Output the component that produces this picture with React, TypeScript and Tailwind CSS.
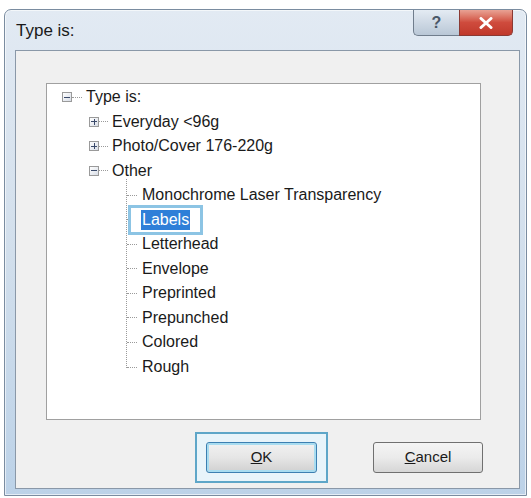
import React from 'react'

const font = { fontFamily: '"Liberation Sans", Arial, sans-serif' }

const ExpandBox = ({ open }: { open: boolean }) => (
  <span className="relative flex h-[10px] w-[10px] shrink-0 items-center justify-center border border-[#9a9a9a] bg-gradient-to-br from-white to-[#d8dde6]">
    <span className="absolute h-[1px] w-[6px] bg-[#3a4a6a]" />
    {!open && <span className="absolute h-[6px] w-[1px] bg-[#3a4a6a]" />}
  </span>
)

const Dash = ({ w }: { w: string }) => (
  <span className={`${w} shrink-0 border-t border-dotted border-[#9a9a9a]`} />
)

const leaves = [
  'Monochrome Laser Transparency',
  'Labels',
  'Letterhead',
  'Envelope',
  'Preprinted',
  'Prepunched',
  'Colored',
  'Rough',
]

export default function App() {
  return (
    <div className="h-[498px] w-[531px] overflow-hidden bg-white pl-[4px] pt-[9px]" style={font}>
      {/* window frame */}
      <div className="flex h-[487px] w-[523px] flex-col rounded-t-[7px] border border-[#7a8ca0] bg-gradient-to-b from-[#e2eaf3] via-[#d2dfec] to-[#bcd2e8] pb-[6px] pl-[10px] pr-[6px] shadow-[inset_0_0_0_1px_rgba(255,255,255,0.6)]">
        {/* title bar */}
        <div className="relative flex h-[40px] shrink-0 items-center">
          <span className="pl-[1px] pt-[2px] text-[17px] text-[#1a1a1a]">Type is:</span>
          <div className="absolute right-[7px] top-0 flex h-[26px]">
            <div className="flex w-[46px] items-center justify-center rounded-bl-[5px] border border-r-0 border-t-0 border-[#707d8c] bg-gradient-to-b from-[#e4ebf3] to-[#b9c7d6]">
              <span className="text-[16px] font-bold leading-none text-[#4a5868]">?</span>
            </div>
            <div className="flex w-[54px] items-center justify-center rounded-br-[5px] border border-t-0 border-[#8a3a34] bg-gradient-to-b from-[#e8a294] via-[#cf4b3d] to-[#c0392b]">
              <svg width="14" height="12" viewBox="0 0 14 12">
                <path d="M2 1.5 L12 10.5 M12 1.5 L2 10.5" stroke="#fff" strokeWidth="3" strokeLinecap="round" />
              </svg>
            </div>
          </div>
        </div>

        {/* client area */}
        <div className="flex flex-1 flex-col border border-[#8a98a8] bg-[#f0f0f0] pl-[30px] pr-[38px] pt-[32px]">
          {/* tree */}
          <div className="h-[337px] border border-[#a0a0a0] bg-white pl-[15px] pt-[1px] text-[16px] text-[#1a1a1a]">
            <div className="flex h-[24.5px] items-center">
              <ExpandBox open />
              <Dash w="w-[10px]" />
              <span className="pl-[4px]">Type is:</span>
            </div>
            <div className="ml-[32px] pl-0">
              <div className="-ml-[5px] flex h-[24.5px] items-center">
                <ExpandBox open={false} />
                <Dash w="w-[9px]" />
                <span className="pl-[4px]">Everyday &lt;96g</span>
              </div>
              <div className="-ml-[5px] flex h-[24.5px] items-center">
                <ExpandBox open={false} />
                <Dash w="w-[9px]" />
                <span className="pl-[4px]">Photo/Cover 176-220g</span>
              </div>
              <div className="-ml-[5px] flex h-[24.5px] items-center">
                <ExpandBox open />
                <Dash w="w-[9px]" />
                <span className="pl-[4px]">Other</span>
              </div>
            </div>
            <div className="ml-[64px] mt-[-4px] border-l border-dotted border-[#9a9a9a] pt-[4px]">
              {leaves.map((l, i) => (
                <div key={l} className={`flex items-center ${i === leaves.length - 1 ? 'h-[13px] items-end' : 'h-[24.5px]'}`}>
                  {i === leaves.length - 1 ? (
                    <div className="flex h-[24.5px] translate-y-[12px] items-center">
                      <Dash w="w-[10px]" />
                      <span className="pl-[5px]">{l}</span>
                    </div>
                  ) : l === 'Labels' ? (
                    <>
                      <Dash w="w-[2px]" />
                      <div className="-ml-[1px] border-[3px] border-[#8cc4e4] bg-white py-[2px] pl-[10px] pr-[10px]">
                        <span className="block bg-[#2f7fd8] px-[1px] leading-[20px] text-white">{l}</span>
                      </div>
                    </>
                  ) : (
                    <>
                      <Dash w="w-[10px]" />
                      <span className="pl-[5px]">{l}</span>
                    </>
                  )}
                </div>
              ))}
            </div>
          </div>

          {/* buttons */}
          <div className="flex pt-[12px]">
            <div className="ml-[149px] border-[2px] border-[#5ea6c8] bg-[#e8f4fa] px-[9px] py-[8px]">
              <button className="flex h-[31px] w-[111px] items-center justify-center rounded-[3px] border border-[#3c7fb1] bg-gradient-to-b from-[#f2f2f2] via-[#e6e6e6] to-[#d0d0d0] text-[15px] text-[#1a1a1a] shadow-[inset_0_0_0_2px_#a8dcf0]">
                <span><span className="underline">O</span>K</span>
              </button>
            </div>
            <div className="ml-[45px] pt-[10px]">
              <button className="flex h-[31px] w-[110px] items-center justify-center rounded-[3px] border border-[#707070] bg-gradient-to-b from-[#f4f4f4] via-[#ebebeb] to-[#d6d6d6] text-[15px] text-[#1a1a1a]">
                <span><span className="underline">C</span>ancel</span>
              </button>
            </div>
          </div>
        </div>
      </div>
    </div>
  )
}
